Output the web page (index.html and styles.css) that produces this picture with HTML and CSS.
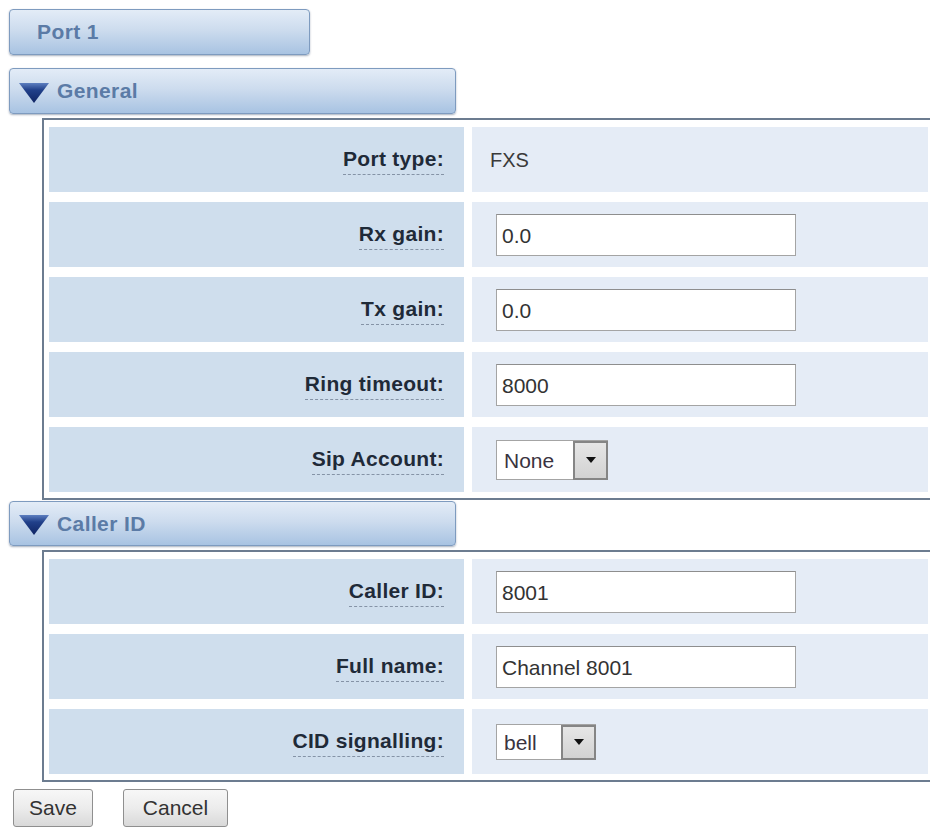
FILE: index.html
```html
<!DOCTYPE html>
<html lang="en">
<head>
    <meta charset="UTF-8">
    <meta name="viewport" content="width=device-width, initial-scale=1.0">
    <title>Port 1</title>
    <link rel="stylesheet" href="styles.css">
</head>
<body>
    <div class="page">
        <div class="tab port-tab">Port 1</div>

        <div class="tab section-tab">
            <svg class="toggle" width="30" height="20" viewBox="0 0 30 20">
                <defs>
                    <linearGradient id="tri" x1="0" y1="0" x2="0" y2="1">
                        <stop offset="0" stop-color="#5d7fc0"/>
                        <stop offset="0.35" stop-color="#21408a"/>
                        <stop offset="1" stop-color="#0f2463"/>
                    </linearGradient>
                </defs>
                <polygon points="0,0 30,0 15,20" fill="url(#tri)"/>
            </svg>
            General
        </div>
        <div class="section">
            <div class="label-cell"><span class="label">Port type:</span></div>
            <div class="value-cell"><span class="plain">FXS</span></div>

            <div class="label-cell"><span class="label">Rx gain:</span></div>
            <div class="value-cell"><input class="text-input" type="text" value="0.0"></div>

            <div class="label-cell"><span class="label">Tx gain:</span></div>
            <div class="value-cell"><input class="text-input" type="text" value="0.0"></div>

            <div class="label-cell"><span class="label">Ring timeout:</span></div>
            <div class="value-cell"><input class="text-input" type="text" value="8000"></div>

            <div class="label-cell"><span class="label">Sip Account:</span></div>
            <div class="value-cell">
                <span class="select-wrap">
                    <select class="select select-none">
                        <option>None</option>
                    </select>
                    <span class="select-arrow"><svg width="10" height="6" viewBox="0 0 10 6"><polygon points="0,0 10,0 5,6" fill="#111"/></svg></span>
                </span>
            </div>
        </div>

        <div class="tab section-tab caller-tab">
            <svg class="toggle" width="30" height="20" viewBox="0 0 30 20">
                <polygon points="0,0 30,0 15,20" fill="url(#tri)"/>
            </svg>
            Caller ID
        </div>
        <div class="section">
            <div class="label-cell"><span class="label">Caller ID:</span></div>
            <div class="value-cell"><input class="text-input" type="text" value="8001"></div>

            <div class="label-cell"><span class="label">Full name:</span></div>
            <div class="value-cell"><input class="text-input" type="text" value="Channel 8001"></div>

            <div class="label-cell"><span class="label">CID signalling:</span></div>
            <div class="value-cell">
                <span class="select-wrap">
                    <select class="select select-bell">
                        <option>bell</option>
                        <option>v23</option>
                        <option>dtmf</option>
                    </select>
                    <span class="select-arrow"><svg width="10" height="6" viewBox="0 0 10 6"><polygon points="0,0 10,0 5,6" fill="#111"/></svg></span>
                </span>
            </div>
        </div>

        <div class="actions">
            <button class="btn btn-save">Save</button>
            <button class="btn btn-cancel">Cancel</button>
        </div>
    </div>
</body>
</html>
```

FILE: styles.css
```css
body {
    margin: 0;
    background: #ffffff;
    font-family: "Liberation Sans", Arial, sans-serif;
    color: #333;
}

.page {
    padding: 9px 0 0 9px;
}

/* blue gradient bars */
.tab {
    box-sizing: border-box;
    height: 46px;
    display: flex;
    align-items: center;
    border: 1px solid #7e9bbf;
    border-radius: 4px;
    background: linear-gradient(to bottom, #e3ecf7 0%, #cddcee 45%, #a8c3e2 100%);
    box-shadow: 0 1px 2px rgba(60, 80, 110, 0.45);
    color: #5b7ba6;
    font-size: 21px;
    font-weight: bold;
    letter-spacing: 0.4px;
}

.port-tab {
    width: 301px;
    padding-left: 27px;
    margin-bottom: 13px;
}

.section-tab {
    width: 447px;
    padding-left: 9px;
    margin-bottom: 4px;
}

.caller-tab {
    height: 45px;
    margin-top: 1px;
}

.toggle {
    margin-right: 8px;
    margin-top: 3px;
}

/* form block */
.section {
    box-sizing: border-box;
    width: 888px;
    margin-left: 33px;
    border-left: 2px solid #6c7c90;
    border-top: 2px solid #6c7c90;
    border-bottom: 2px solid #6c7c90;
    padding: 7px 2px 6px 5px;
    display: grid;
    grid-template-columns: 415px 1fr;
    grid-auto-rows: 65px;
    column-gap: 8px;
    row-gap: 10px;
}

.label-cell {
    background: #cfdeed;
    display: flex;
    align-items: center;
    justify-content: flex-end;
    padding-right: 20px;
}

.label {
    display: inline-block;
    line-height: 22px;
    padding-top: 4px;
    padding-bottom: 4px;
    border-bottom: 1px dashed #8593a6;
    color: #1f2a38;
    font-size: 21px;
    font-weight: bold;
    letter-spacing: 0.3px;
}

.value-cell {
    background: #e5ecf6;
    display: flex;
    align-items: center;
    padding-left: 18px;
}

.plain {
    font-size: 20px;
    color: #3a3a3a;
    padding-top: 2px;
}

.text-input {
    box-sizing: border-box;
    width: 300px;
    height: 42px;
    margin: 0 0 0 6px;
    padding: 2px 5px 0;
    border: 1px solid #a4a4a4;
    border-top-color: #8e8e8e;
    background: #fff;
    font-family: "Liberation Sans", Arial, sans-serif;
    font-size: 21px;
    color: #333;
}

.select-wrap {
    position: relative;
    display: inline-block;
    margin-left: 6px;
}

.select {
    box-sizing: border-box;
    display: block;
    appearance: none;
    -webkit-appearance: none;
    border: 1px solid #a4a4a4;
    border-radius: 0;
    background: #fff;
    padding: 2px 0 0 7px;
    font-family: "Liberation Sans", Arial, sans-serif;
    font-size: 21px;
    color: #3a3340;
}

.select-none {
    width: 112px;
    height: 40px;
}

.select-bell {
    width: 100px;
    height: 36px;
}

.select-arrow {
    position: absolute;
    top: 1px;
    right: 0;
    bottom: 0;
    width: 35px;
    box-sizing: border-box;
    border: 2px solid #858585;
    background: linear-gradient(to bottom, #e6e6e6, #d2d2d2);
    display: flex;
    align-items: center;
    justify-content: center;
    pointer-events: none;
}

/* buttons */
.actions {
    display: flex;
    gap: 30px;
    margin-top: 7px;
    padding-left: 4px;
}

.btn {
    box-sizing: border-box;
    height: 38px;
    border: 1px solid #8f8f8f;
    border-radius: 3px;
    background: linear-gradient(to bottom, #f7f7f7 0%, #ececec 50%, #d9d9d9 100%);
    font-family: "Liberation Sans", Arial, sans-serif;
    font-size: 21px;
    color: #333;
    padding: 0;
    cursor: pointer;
}

.btn-save {
    width: 80px;
}

.btn-cancel {
    width: 105px;
}
```
